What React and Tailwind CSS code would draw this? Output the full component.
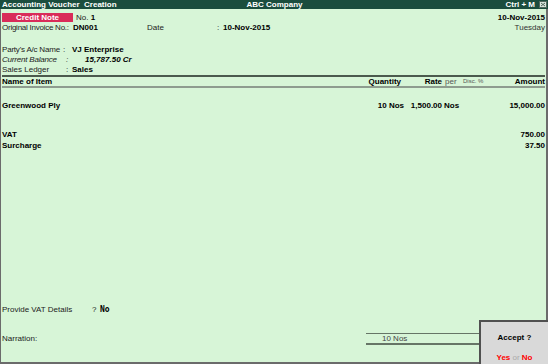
export default function App() {
  return (
    <div className="relative w-[548px] h-[364px] flex flex-col bg-[#d7f5d7] text-[8px] leading-[10px] text-[#222] font-['Liberation_Sans',Arial,sans-serif] whitespace-nowrap overflow-hidden">
      {/* Title bar */}
      <div className="h-[9px] bg-[#1b4d3e] text-white font-bold leading-[9px] flex items-center pl-[2px] pr-[1px] shrink-0">
        <div className="flex-1 whitespace-pre">Accounting Voucher  Creation</div>
        <div>ABC Company</div>
        <div className="flex-1 flex justify-end items-center gap-[4px]">
          <span>Ctrl + M</span>
          <svg width="8" height="7" viewBox="0 0 8 7">
            <rect x="0" y="0" width="8" height="7" fill="#d8e6de" />
            <rect x="0.5" y="0.5" width="7" height="6" fill="none" stroke="#51685d" strokeWidth="1" />
            <path d="M2 2 L6 5 M6 2 L2 5" stroke="#51685d" strokeWidth="1" />
          </svg>
        </div>
      </div>

      {/* Body */}
      <div className="flex-1 flex flex-col border-l border-r-2 border-b-2 border-[#6b6b6b] pl-[1px] pr-[1px]">
        {/* Row 1 */}
        <div className="mt-[4px] h-[10px] flex items-start">
          <div className="w-[71px] shrink-0 h-[9px] bg-[#d92c5a] text-white font-bold leading-[9px] text-center">Credit Note</div>
          <div className="ml-[3px]">No. <span className="font-bold text-black">1</span></div>
          <div className="ml-auto font-bold text-black">10-Nov-2015</div>
        </div>
        {/* Row 2 */}
        <div className="h-[10px] flex">
          <div className="w-[71px] shrink-0 tracking-[-0.25px]">Original Invoice No.:</div>
          <div className="w-[74px] shrink-0 font-bold text-black">DN001</div>
          <div className="w-[70px] shrink-0">Date</div>
          <div className="w-[6px] shrink-0">:</div>
          <div className="font-bold text-black">10-Nov-2015</div>
          <div className="ml-auto text-[#333]">Tuesday</div>
        </div>

        {/* Party rows */}
        <div className="mt-[12px] h-[10px] flex">
          <div className="w-[61px] shrink-0 tracking-[-0.2px]">Party's A/c Name</div>
          <div className="w-[9px] shrink-0">:</div>
          <div className="font-bold text-black">VJ Enterprise</div>
        </div>
        <div className="h-[10px] flex italic">
          <div className="w-[64px] shrink-0 tracking-[-0.2px]">Current Balance</div>
          <div className="w-[19px] shrink-0">:</div>
          <div className="font-bold text-black">15,787.50 Cr</div>
        </div>
        <div className="h-[10px] flex">
          <div className="w-[64px] shrink-0">Sales Ledger</div>
          <div className="w-[6px] shrink-0">:</div>
          <div className="font-bold text-black">Sales</div>
        </div>

        {/* Table header */}
        <div className="h-[2px] bg-[#4b5a4d]"></div>
        <div className="h-[9px] leading-[9px] flex font-bold text-black">
          <div className="flex-1">Name of Item</div>
          <div className="w-[60px] text-right">Quantity</div>
          <div className="w-[41px] text-right">Rate</div>
          <div className="w-[20px] pl-[3px] font-normal text-[#555]">per</div>
          <div className="w-[28px] pl-[1px] font-normal text-[6px] text-[#555]">Disc. %</div>
          <div className="w-[55px] text-right">Amount</div>
        </div>
        <div className="h-[2px] bg-[#8e9c8f]"></div>

        {/* Items */}
        <div className="mt-[13px] h-[10px] flex font-bold text-black">
          <div className="flex-1">Greenwood Ply</div>
          <div className="w-[62px] text-right">10 Nos</div>
          <div className="w-[38px] text-right">1,500.00</div>
          <div className="w-[23px] pl-[2px]">Nos</div>
          <div className="w-[25px]"></div>
          <div className="w-[55px] text-right">15,000.00</div>
        </div>
        <div className="mt-[19px] h-[11px] flex font-bold text-black">
          <div className="flex-1">VAT</div>
          <div>750.00</div>
        </div>
        <div className="h-[10px] flex font-bold text-black">
          <div className="flex-1">Surcharge</div>
          <div>37.50</div>
        </div>

        <div className="flex-1"></div>

        {/* Bottom */}
        <div className="h-[10px] flex">
          <div className="w-[90px] shrink-0">Provide VAT Details</div>
          <div className="w-[8px] shrink-0">?</div>
          <div className="font-bold text-black font-['DejaVu_Sans_Mono',monospace] text-[8px]">No</div>
        </div>
        <div className="mt-[9px] pb-[17px] flex items-start">
          <div className="w-[364px] shrink-0 mt-[10px]">Narration:</div>
          <div className="w-[113px] shrink-0 mt-[9px] border-t border-b-2 border-[#667566]">
            <div className="h-[9px] leading-[9px] pl-[16px] text-[#444]">10 Nos</div>
          </div>
        </div>
      </div>

      {/* Accept box */}
      <div className="absolute right-0 bottom-0 w-[69px] h-[44px] bg-[#d9d9d9] border-t-2 border-l-2 border-[#505050] flex flex-col items-center">
        <div className="mt-[11px] font-bold text-black">Accept ?</div>
        <div className="mt-[10px] font-bold">
          <span className="text-[#f00]">Yes</span>
          <span className="font-normal text-[#aaa]"> or </span>
          <span className="text-[#f00]">No</span>
        </div>
      </div>
    </div>
  );
}
